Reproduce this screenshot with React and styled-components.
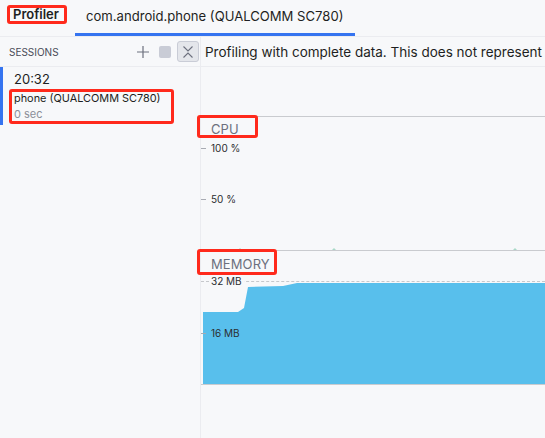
import React from "react";
import styled, { createGlobalStyle } from "styled-components";

const GlobalStyle = createGlobalStyle`
  html, body {
    margin: 0;
    padding: 0;
    background: #f7f8fa;
  }
  body {
    font-family: Inter, "Noto Sans", "Liberation Sans", sans-serif;
    color: #1e1f22;
  }
`;

const Page = styled.div`
  width: 545px;
  height: 438px;
  overflow: hidden;
  display: flex;
  flex-direction: column;
  background: #f7f8fa;
`;

const TopBar = styled.div`
  height: 37px;
  box-sizing: border-box;
  border-bottom: 1px solid #ebecf0;
  display: flex;
  align-items: flex-start;
`;

const Marked = styled.div`
  position: relative;
  z-index: 2;
  box-sizing: border-box;
  border: 3px solid #ff2a1c;
  border-radius: 3px;
`;

const ProfilerBox = styled(Marked)`
  margin: 5px 0 0 7px;
  height: 19px;
  width: 60px;
  padding: 0 0 0 3px;
  font-size: 13px;
  font-weight: 600;
  line-height: 13px;
`;

const Tab = styled.div`
  margin-left: 8px;
  height: 36px;
  box-sizing: border-box;
  padding: 8px 12px 0 11px;
  border-bottom: 3px solid #3574f0;
  font-size: 13.1px;
  line-height: 17px;
  white-space: nowrap;
`;

const Body = styled.div`
  flex: 1;
  display: flex;
  min-height: 0;
`;

const Sidebar = styled.div`
  width: 201px;
  box-sizing: border-box;
  border-right: 1px solid #ebecf0;
  display: flex;
  flex-direction: column;
`;

const BarHeader = styled.div`
  height: 30px;
  box-sizing: border-box;
  border-bottom: 1px solid #ebecf0;
  display: flex;
  align-items: center;
`;

const SessionsHeader = styled(BarHeader)`
  padding-left: 9px;
`;

const SectionTitle = styled.span`
  font-size: 10px;
  color: #494b57;
  flex: 1;
`;

const IconSlot = styled.div`
  width: ${(p) => p.$w || 16}px;
  height: 21px;
  display: flex;
  align-items: center;
  justify-content: center;
  margin-right: ${(p) => p.$mr || 0}px;
`;

const StopSquare = styled.div`
  width: 12px;
  height: 12px;
  border-radius: 2px;
  background: #c9ccd6;
`;

const CollapseButton = styled.div`
  width: 22px;
  height: 21px;
  box-sizing: border-box;
  border: 1px solid #c9ccd6;
  border-radius: 3px;
  background: #e4e6eb;
  display: flex;
  align-items: center;
  justify-content: center;
  margin-right: 1px;
`;

const SessionItem = styled.div`
  border-left: 3px solid #3574f0;
  padding: 4px 0 1px 11px;
`;

const SessionTime = styled.div`
  font-size: 13px;
  line-height: 17px;
  margin-bottom: 1px;
`;

const SessionBox = styled(Marked)`
  margin-left: -5px;
  width: 165px;
  padding: 0 0 0 2px;
`;

const DeviceName = styled.div`
  font-size: 10.9px;
  line-height: 12px;
  white-space: nowrap;
`;

const Duration = styled.div`
  margin-top: 3px;
  font-size: 11px;
  line-height: 14px;
  color: #8c8f99;
`;

const Main = styled.div`
  flex: 1;
  display: flex;
  flex-direction: column;
  min-width: 0;
`;

const InfoBar = styled(BarHeader)`
  padding-left: 4px;
  font-size: 13.5px;
  white-space: nowrap;
  overflow: hidden;
`;

const EventArea = styled.div`
  height: 49px;
`;

const Track = styled.div`
  border-top: 1px solid #c9cbcf;
  display: flex;
  flex-direction: column;
  align-items: flex-start;
`;

const TrackLabel = styled(Marked)`
  margin: -2px 0 0 -4px;
  width: ${(p) => p.$w}px;
  height: ${(p) => p.$h}px;
  padding: ${(p) => p.$pt}px 0 0 11px;
  font-size: 13px;
  line-height: 16px;
  color: #6c707e;
  letter-spacing: 0.1px;
`;

const Chart = styled.div`
  position: relative;
  align-self: stretch;
  height: ${(p) => p.$h}px;
  border-bottom: ${(p) => (p.$baseline ? "1px solid #c9cbcf" : "none")};
`;

const Axis = styled.span`
  position: absolute;
  left: 10px;
  top: ${(p) => p.$y - 6}px;
  font-size: 10px;
  line-height: 12px;
  color: #2b2d30;
  padding-right: 2px;
  background: ${(p) => (p.$solid ? "#f7f8fa" : "transparent")};
  z-index: 1;
  &::before {
    content: "";
    display: ${(p) => (p.$solid ? "none" : "block")};
    position: absolute;
    left: -10px;
    top: 6px;
    width: 5px;
    height: 1px;
    background: #a8abb3;
  }
`;

const DashedLine = styled.div`
  position: absolute;
  left: 0;
  right: 0;
  top: ${(p) => p.$y}px;
  border-top: 1px dashed #c6c8cc;
`;

const Plot = styled.svg`
  position: absolute;
  left: 0;
  top: 0;
  width: 100%;
  height: 100%;
`;

const PlusIcon = () => (
  <svg width="14" height="14" viewBox="0 0 14 14">
    <path d="M7 1v12M1 7h12" stroke="#6c707e" strokeWidth="1.2" fill="none" />
  </svg>
);

const CollapseIcon = () => (
  <svg width="12" height="14" viewBox="0 0 12 14">
    <path
      d="M1.5 1.5l4.5 4.5 4.5-4.5M1.5 12.5l4.5-4.5 4.5 4.5"
      stroke="#6c707e"
      strokeWidth="1.1"
      fill="none"
    />
  </svg>
);

const memoryPoints =
  "2,109 2,37 37,37 43,33 47,12 82,11 96,8 344,8 344,109";

export default function App() {
  return (
    <Page>
      <GlobalStyle />
      <TopBar>
        <ProfilerBox>Profiler</ProfilerBox>
        <Tab>com.android.phone (QUALCOMM SC780)</Tab>
      </TopBar>
      <Body>
        <Sidebar>
          <SessionsHeader>
            <SectionTitle>SESSIONS</SectionTitle>
            <IconSlot $w={16} $mr={7}>
              <PlusIcon />
            </IconSlot>
            <IconSlot $w={14} $mr={5}>
              <StopSquare />
            </IconSlot>
            <CollapseButton>
              <CollapseIcon />
            </CollapseButton>
          </SessionsHeader>
          <SessionItem>
            <SessionTime>20:32</SessionTime>
            <SessionBox>
              <DeviceName>phone (QUALCOMM SC780)</DeviceName>
              <Duration>0 sec</Duration>
            </SessionBox>
          </SessionItem>
        </Sidebar>
        <Main>
          <InfoBar>
            Profiling with complete data. This does not represent app
            performance in production.
          </InfoBar>
          <EventArea />
          <Track>
            <TrackLabel $w={61} $h={23} $pt={3}>
              CPU
            </TrackLabel>
            <Chart $h={112}>
              <Axis $y={10}>100 %</Axis>
              <Axis $y={61}>50 %</Axis>
              <Plot viewBox="0 0 344 112" preserveAspectRatio="none">
                <path
                  d="M37 112l2-2 2 2zM131 112l2-2 2 2zM312 112l2-2 2 2z"
                  fill="#a9d9c8"
                />
              </Plot>
            </Chart>
          </Track>
          <Track>
            <TrackLabel $w={80} $h={26} $pt={4}>
              MEMORY
            </TrackLabel>
            <Chart $h={109} $baseline>
              <Plot viewBox="0 0 344 109" preserveAspectRatio="none">
                <polygon points={memoryPoints} fill="#58bfec" />
              </Plot>
              <DashedLine $y={6} />
              <Axis $y={6} $solid>
                32 MB
              </Axis>
              <Axis $y={58}>16 MB</Axis>
            </Chart>
          </Track>
        </Main>
      </Body>
    </Page>
  );
}
